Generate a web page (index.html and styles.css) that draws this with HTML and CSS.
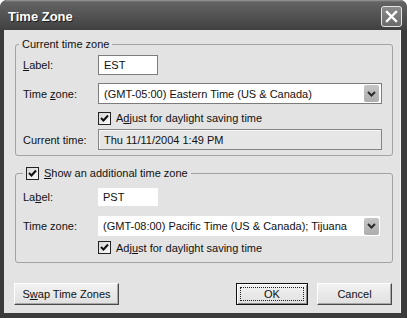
FILE: index.html
```html
<!DOCTYPE html>
<html lang="en">
<head>
    <meta charset="UTF-8">
    <title>Time Zone</title>
    <link rel="stylesheet" href="styles.css">
</head>
<body>
    <div class="window">
        <div class="titlebar">
            <span class="title">Time Zone</span>
            <span class="close">
                <svg width="13" height="13" viewBox="0 0 13 13"><path d="M2 2 L11 11 M11 2 L2 11" stroke="#fff" stroke-width="2.4" stroke-linecap="square"/></svg>
            </span>
        </div>
        <div class="client">
            <fieldset class="group first">
                <legend>Current time zone</legend>
                <div class="row r1">
                    <span class="lbl"><u>L</u>abel:</span>
                    <span class="field edit short">EST</span>
                </div>
                <div class="row r2">
                    <span class="lbl">Time <u>z</u>one:</span>
                    <span class="field combo">(GMT-05:00) Eastern Time (US &amp; Canada)
                        <span class="drop"><svg width="9" height="6" viewBox="0 0 9 6"><path d="M1 1 L4.5 4.5 L8 1" fill="none" stroke="#2a2a2a" stroke-width="2"/></svg></span>
                    </span>
                </div>
                <div class="row r3">
                    <span class="lbl"></span>
                    <span class="check"><svg width="9" height="9" viewBox="0 0 9 9"><path d="M1 4 L3.5 6.5 L8 1.5" fill="none" stroke="#111" stroke-width="2"/></svg></span>
                    <span>A<u>d</u>just for daylight saving time</span>
                </div>
                <div class="row r4">
                    <span class="lbl">Current time:</span>
                    <span class="field readonly">Thu 11/11/2004 1:49 PM</span>
                </div>
            </fieldset>

            <fieldset class="group second">
                <legend>
                    <span class="check"><svg width="9" height="9" viewBox="0 0 9 9"><path d="M1 4 L3.5 6.5 L8 1.5" fill="none" stroke="#111" stroke-width="2"/></svg></span>
                    <span><u>S</u>how an additional time zone</span>
                </legend>
                <div class="row s1">
                    <span class="lbl">La<u>b</u>el:</span>
                    <span class="field flat short">PST</span>
                </div>
                <div class="row s2">
                    <span class="lbl">Time zone:</span>
                    <span class="field flat combo">(GMT-08:00) Pacific Time (US &amp; Canada); Tijuana
                        <span class="drop"><svg width="9" height="6" viewBox="0 0 9 6"><path d="M1 1 L4.5 4.5 L8 1" fill="none" stroke="#2a2a2a" stroke-width="2"/></svg></span>
                    </span>
                </div>
                <div class="row s3">
                    <span class="lbl"></span>
                    <span class="check"><svg width="9" height="9" viewBox="0 0 9 9"><path d="M1 4 L3.5 6.5 L8 1.5" fill="none" stroke="#111" stroke-width="2"/></svg></span>
                    <span>Adj<u>u</u>st for daylight saving time</span>
                </div>
            </fieldset>

            <div class="buttons">
                <span class="btn swap">S<u>w</u>ap Time Zones</span>
                <span class="spacer"></span>
                <span class="btn ok"><span class="focus">OK</span></span>
                <span class="btn cancel">Cancel</span>
            </div>
        </div>
    </div>
</body>
</html>
```

FILE: styles.css
```css
body {
    margin: 0;
    padding: 0;
    background-color: #ffffff;
    font-family: 'Liberation Sans', Arial, sans-serif;
    font-size: 11px;
    color: #111;
}
.window {
    width: 407px;
    height: 318px;
    box-sizing: border-box;
    background-color: #3b3b3b;
    border-radius: 7px 7px 0 0;
    display: flex;
    flex-direction: column;
    overflow: hidden;
}
.titlebar {
    height: 30px;
    flex: none;
    display: flex;
    align-items: center;
    justify-content: space-between;
    padding: 0 5px 0 8px;
    background: linear-gradient(#9a9a9a 0, #636363 2px, #575757 40%, #4a4a4a 75%, #404040 100%);
    border-radius: 7px 7px 0 0;
}
.title {
    color: #ffffff;
    font-weight: bold;
    font-size: 13px;
    text-shadow: 1px 1px 0 #1c1c1c;
    margin-top: 2px;
}
.close {
    width: 19px;
    height: 19px;
    margin-top: 2px;
    border: 1px solid #e6e6e6;
    border-radius: 3px;
    background: linear-gradient(#8a8a8a, #6a6a6a);
    display: flex;
    align-items: center;
    justify-content: center;
}
.client {
    flex: 1;
    margin: 0 6px 6px 4px;
    padding: 8px 7px 8px 11px;
    background-color: #e3e3e3;
    border-right: 1px solid #f4f4f4;
    display: flex;
    flex-direction: column;
}
.group {
    margin: 0;
    min-width: 0;
    border: 1px solid #a2a2a2;
    border-radius: 3px;
    padding: 4px 10px 5px 7px;
}
.group legend {
    padding: 0 3px;
    line-height: 13px;
}
.first legend {
    margin-left: -4px;
}
.second {
    margin-top: 11px;
    padding-top: 8px;
    padding-bottom: 6px;
}
.second legend {
    display: flex;
    align-items: center;
    gap: 5px;
}
.row {
    display: flex;
    align-items: center;
}
.lbl {
    width: 75px;
    flex: none;
}
.r1 { height: 20px; }
.r2 { height: 21px; margin-top: 8px; }
.r3 { height: 20px; margin-top: 4px; }
.r4 { height: 21px; margin-top: 1px; }
.s1 { height: 18px; }
.s2 { height: 20px; margin-top: 10px; }
.s3 { height: 17px; margin-top: 3px; }
.field {
    box-sizing: border-box;
    height: 100%;
    display: flex;
    align-items: center;
    padding-left: 5px;
    background-color: #ffffff;
}
.edit {
    border: 1px solid #7c7c7c;
}
.short {
    width: 60px;
}
.combo {
    flex: 1;
    justify-content: space-between;
    border: 1px solid #7c7c7c;
    padding-right: 2px;
}
.flat {
    border: none;
}
.flat.combo {
    margin-right: 2px;
    padding-right: 1px;
}
.drop {
    width: 15px;
    height: 17px;
    background: linear-gradient(#c6c6c6, #adadad);
    border-radius: 2px;
    display: flex;
    align-items: center;
    justify-content: center;
}
.readonly {
    flex: 1;
    background-color: #e6e6e6;
    border: 1px solid #858585;
    box-shadow: inset 1px 1px 0 #f6f6f6;
}
.check {
    box-sizing: border-box;
    width: 13px;
    height: 13px;
    flex: none;
    border: 1px solid #222;
    background: linear-gradient(135deg, #d8d8d8, #fafafa);
    display: flex;
    align-items: center;
    justify-content: center;
    margin-right: 5px;
}
.second legend .check {
    margin-right: 0;
}
.buttons {
    margin-top: 20px;
    display: flex;
    height: 22px;
}
.spacer {
    flex: 1;
}
.btn {
    box-sizing: border-box;
    height: 22px;
    display: flex;
    align-items: center;
    justify-content: center;
    background: linear-gradient(#f2f2f2, #e0e0e0);
    border: 1px solid #ffffff;
    border-right-color: #4a4a4a;
    border-bottom-color: #4a4a4a;
    box-shadow: inset -1px -1px 0 #a8a8a8;
}
.swap {
    width: 105px;
    margin-left: -1px;
}
.ok {
    width: 72px;
    border: 1px solid #111;
    box-shadow: inset 1px 1px 0 #fff, inset -1px -1px 0 #888;
}
.ok .focus {
    box-sizing: border-box;
    width: 64px;
    height: 14px;
    border: 1px dotted #222;
    display: flex;
    align-items: center;
    justify-content: center;
}
.cancel {
    width: 75px;
    margin-left: 9px;
    margin-right: 1px;
}
```
